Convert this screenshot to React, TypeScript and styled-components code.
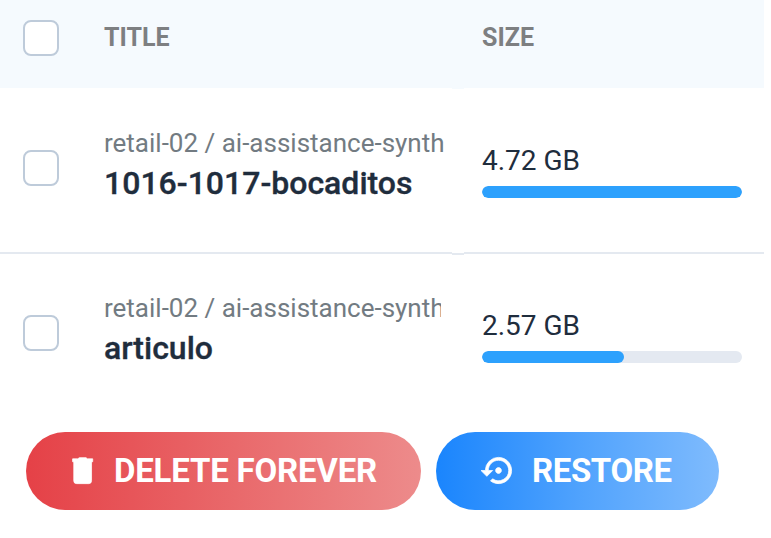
import React from "react";
import styled, { createGlobalStyle } from "styled-components";
import { MdSettingsBackupRestore } from "react-icons/md";

const GlobalStyle = createGlobalStyle`
  * { box-sizing: border-box; }
  body { margin: 0; background: #fff; font-family: Roboto, sans-serif; overflow: hidden; }
`;

const Page = styled.main`
  width: 771px;
  height: 538px;
  overflow: hidden;
`;

const Table = styled.div`
  width: 764px;
`;

const Row = styled.div<{ $height: number }>`
  display: grid;
  grid-template-columns: 452px 12px 300px;
  height: ${(p) => p.$height}px;
`;

const HeaderCell = styled.div`
  display: flex;
  align-items: flex-start;
  background: #f5fafe;
`;

const HeaderMain = styled(HeaderCell)`
  padding: 20px 0 0 23px;
`;

const HeaderSize = styled(HeaderCell)`
  padding: 20px 0 0 18px;
`;

const HeaderSeam = styled(HeaderCell)`
  margin-bottom: -1px;
`;

const HeaderLabel = styled.span`
  font-size: 25px;
  line-height: 36px;
  font-weight: 700;
  color: #7d7f81;
  white-space: nowrap;
`;

const Checkbox = styled.button`
  flex: none;
  width: 36px;
  height: 36px;
  margin: 0 45px 0 0;
  padding: 0;
  border: 2px solid #becbda;
  border-radius: 8px;
  background: #fff;
`;

const MainCell = styled.div<{ $line?: boolean }>`
  display: flex;
  align-items: flex-start;
  padding: ${(p) => (p.$line ? 37 : 36)}px 0 0 23px;
  border-bottom: ${(p) => (p.$line ? "2px solid #e4e9f0" : "none")};

  ${Checkbox} {
    margin-top: 25px;
  }
`;

const SeamCell = styled.div<{ $line?: boolean }>`
  margin-bottom: -1px;
  border-bottom: ${(p) => (p.$line ? "2px solid #e4e9f0" : "none")};
`;

const SizeCell = styled.div<{ $line?: boolean }>`
  padding: ${(p) => (p.$line ? 57 : 56)}px 22px 0 18px;
  border-bottom: ${(p) => (p.$line ? "2px solid #e4e9f0" : "none")};
`;

const TitleBlock = styled.div<{ $width: number }>`
  width: ${(p) => p.$width}px;
  overflow: hidden;
  white-space: nowrap;
`;

const Path = styled.div`
  font-size: 26px;
  line-height: 36px;
  color: #727b82;
`;

const Name = styled.div`
  font-size: 32px;
  line-height: 45px;
  font-weight: 500;
  color: #1f2d3d;
  -webkit-text-stroke: 0.35px currentColor;
`;

const SizeText = styled.div`
  font-size: 28px;
  line-height: 32px;
  color: #1f2d3d;
`;

const Track = styled.div`
  height: 12px;
  margin-top: 9px;
  border-radius: 6px;
  background: #e4e9f1;
  overflow: hidden;
`;

const Fill = styled.div`
  height: 100%;
  border-radius: 6px;
  background: #2da1fd;
`;

const Actions = styled.div`
  display: flex;
  gap: 15px;
  padding: 14px 0 0 26px;
`;

const PillButton = styled.button<{ $tone: "danger" | "primary" }>`
  display: flex;
  align-items: center;
  width: ${(p) => (p.$tone === "danger" ? 395 : 283)}px;
  height: 78px;
  padding: 0 0 0 ${(p) => (p.$tone === "danger" ? 39 : 45)}px;
  border: 0;
  border-radius: 39px;
  background: ${(p) =>
    p.$tone === "danger"
      ? "linear-gradient(90deg, #e54147 0%, #e9696b 53%, #ed8b8b 100%)"
      : "linear-gradient(90deg, #1a85fd 0%, #51a3fd 52%, #7fbbfd 100%)"};
  color: #fff;
  font: 700 33px/40px Roboto, sans-serif;
  letter-spacing: ${(p) => (p.$tone === "danger" ? -0.2 : -0.4)}px;
  white-space: nowrap;

  svg {
    flex: none;
    width: 35px;
    height: 35px;
    margin: -2px ${(p) => (p.$tone === "danger" ? 14 : 16)}px 0 0;
    fill: currentColor;
    stroke: currentColor;
    stroke-width: 0.5px;
  }

  svg path[fill="none"] {
    stroke: none;
  }
`;

const TrashIcon = () => (
  <svg viewBox="0 0 24 24" aria-hidden="true">
    <path d="M6 6h12.2v13a2 2 0 0 1-2 2H8a2 2 0 0 1-2-2zM5.2 4h3.6l1-.8h4.6l1 .8H19v2H5.2z" />
  </svg>
);

const ITEMS = [
  { path: "retail-02 / ai-assistance-synth", name: "1016-1017-bocaditos", size: "4.72 GB", percent: 100, height: 166, width: 340 },
  { path: "retail-02 / ai-assistance-synth", name: "articulo", size: "2.57 GB", percent: 54.6, height: 164, width: 337 },
];

export default function App() {
  return (
    <Page>
      <GlobalStyle />
      <Table>
        <Row $height={88}>
          <HeaderMain>
            <Checkbox aria-label="Select all" />
            <HeaderLabel>TITLE</HeaderLabel>
          </HeaderMain>
          <HeaderSeam />
          <HeaderSize>
            <HeaderLabel>SIZE</HeaderLabel>
          </HeaderSize>
        </Row>
        {ITEMS.map((item, i) => {
          const line = i < ITEMS.length - 1;
          return (
            <Row key={item.name} $height={item.height}>
              <MainCell $line={line}>
                <Checkbox aria-label={`Select ${item.name}`} />
                <TitleBlock $width={item.width}>
                  <Path>{item.path}</Path>
                  <Name>{item.name}</Name>
                </TitleBlock>
              </MainCell>
              <SeamCell $line={line} />
              <SizeCell $line={line}>
                <SizeText>{item.size}</SizeText>
                <Track>
                  <Fill style={{ width: `${item.percent}%` }} />
                </Track>
              </SizeCell>
            </Row>
          );
        })}
      </Table>
      <Actions>
        <PillButton $tone="danger">
          <TrashIcon />
          DELETE FOREVER
        </PillButton>
        <PillButton $tone="primary">
          <MdSettingsBackupRestore />
          RESTORE
        </PillButton>
      </Actions>
    </Page>
  );
}
